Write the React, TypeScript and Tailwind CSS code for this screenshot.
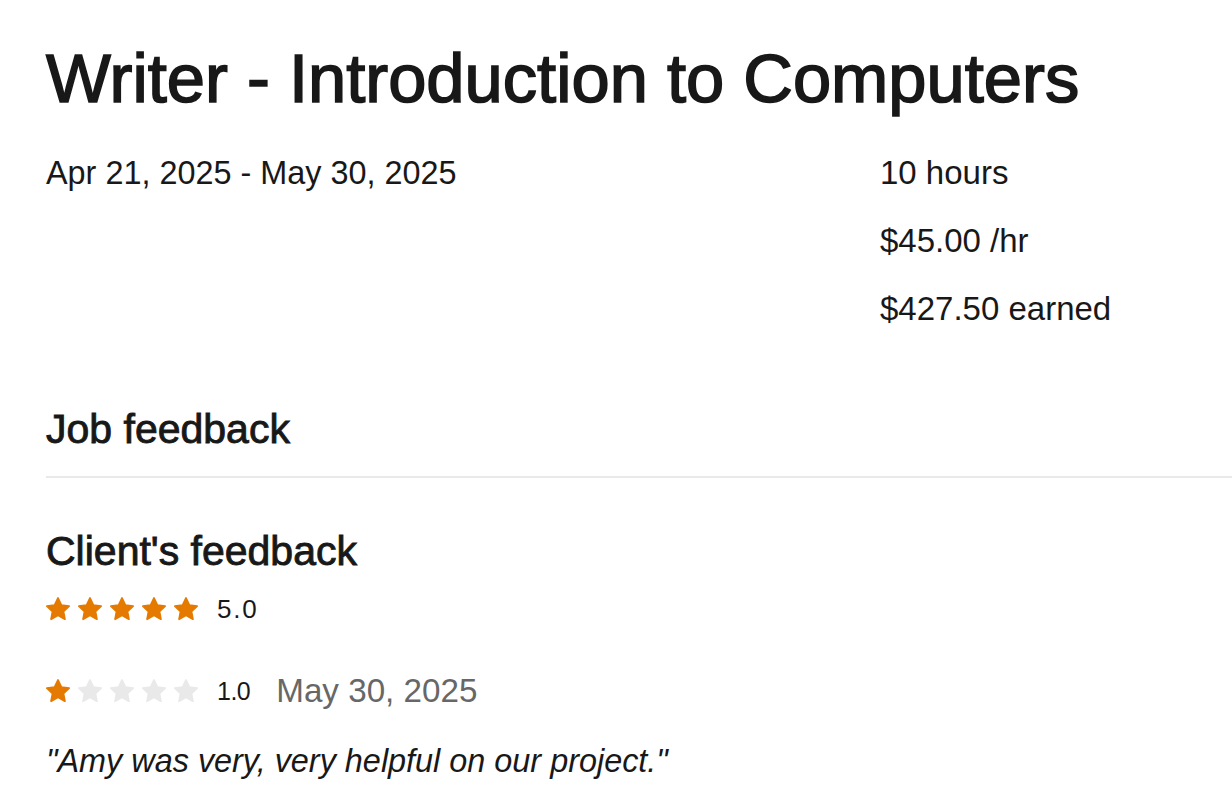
import React from "react";

const STAR = "M12 2.6l2.9 6.1 6.6.8-4.9 4.6 1.3 6.6L12 17.4l-5.9 3.3 1.3-6.6-4.9-4.6 6.6-.8z";

function Star({ filled }: { filled: boolean }) {
  const c = filled ? "#e57a00" : "#e9e9e9";
  return (
    <svg width="28" height="28" viewBox="0 0 24 24" className="shrink-0">
      <path d={STAR} fill={c} stroke={c} strokeWidth="1.6" strokeLinejoin="round" />
    </svg>
  );
}

function Stars({ n }: { n: number }) {
  return (
    <div className="-ml-[2px] flex items-center gap-[4px]">
      {[0, 1, 2, 3, 4].map((i) => (
        <Star key={i} filled={i < n} />
      ))}
    </div>
  );
}

export default function App() {
  return (
    <div
      className="min-h-screen w-full bg-white text-[#181818] overflow-hidden"
      style={{ fontFamily: '"Liberation Sans", Arial, sans-serif' }}
    >
      <div className="pl-[46px] pt-[39px]">
        <h1 className="text-[68.7px] leading-[80px] whitespace-nowrap [-webkit-text-stroke:1.6px_#181818]">
          Writer - Introduction to Computers
        </h1>

        <div className="mt-[20px] flex">
          <div className="w-[834px] text-[32.4px] leading-[68px]">Apr 21, 2025 - May 30, 2025</div>
          <div className="flex flex-col text-[33px] leading-[68px]">
            <div>10 hours</div>
            <div>$45.00 /hr</div>
            <div>$427.50 earned</div>
          </div>
        </div>

        <h2 className="mt-[61px] text-[41px] leading-[50px] [-webkit-text-stroke:0.9px_#181818]">Job feedback</h2>

        <div className="mt-[22px] h-[2px] bg-[#e9e9e9]" />

        <h3 className="mt-[48px] text-[41px] leading-[50px] [-webkit-text-stroke:0.9px_#181818]">Client's feedback</h3>

        <div className="mt-[17px] flex h-[32px] items-center">
          <Stars n={5} />
          <span className="ml-[17px] text-[26px] leading-[32px] tracking-[1.8px]">5.0</span>
        </div>

        <div className="mt-[50px] flex h-[32px] items-center">
          <Stars n={1} />
          <span className="ml-[17px] text-[25px] leading-[32px] tracking-[-0.5px]">1.0</span>
          <span className="ml-[26px] text-[33.2px] leading-[32px] text-[#676767]">May 30, 2025</span>
        </div>

        <p className="mt-[34px] text-[32.4px] leading-[40px] italic">"Amy was very, very helpful on our project."</p>
      </div>
    </div>
  );
}
